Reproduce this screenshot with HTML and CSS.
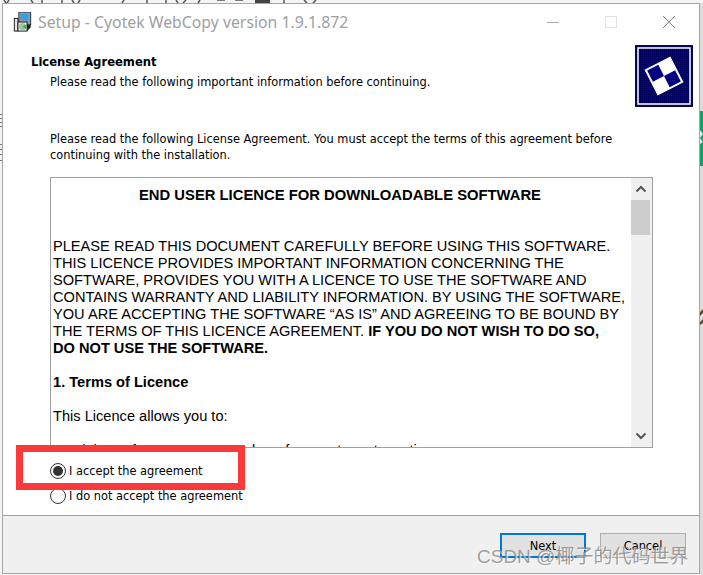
FILE: index.html
```html
<!DOCTYPE html>
<html lang="en">
<head>
<meta charset="utf-8">
<title>Setup - Cyotek WebCopy</title>
<link rel="stylesheet" href="styles.css">
</head>
<body>
<svg class="backdrop" width="703" height="575" viewBox="0 0 703 575" aria-hidden="true">
  <g stroke="#555" stroke-width="1.5" fill="none">
    <path d="M4 0l2 3M9 0l-2 3M31 0l2 3M42 0v3M62 0v3M72 0l2 3M80 0l-2 3M124 0l-2 3M147 0v3M166 0v3M176 0l2 3M186 0l-3 3M200 0l-2 3M217 0h8M235 0h8M284 0v3M304 0l3 3M316 0l-3 3"/>
  </g>
  <rect x="255" y="0" width="15" height="3" fill="#444"/>
  <path d="M0 114h2v1H0zM0 118h2v1H0zM0 122h2v1H0zM0 126h2v1H0zM0 144h2v1H0zM0 149h2v1H0zM0 154h2v1H0zM0 160h2v1H0z" fill="#777"/>
  <rect x="700" y="3" width="3" height="572" fill="#dcdcdc"/>
  <rect x="700" y="111" width="3" height="55" fill="#0aa36a"/>
  <path d="M700 130l3 4-3 4 3 4-3 2v-14z" fill="#dcefe7"/>
  <path d="M700 312l3-3v4l-3 3zM700 322l3-3v4l-3 2z" fill="#5a4a3a"/>
</svg>
<main class="window">
  <header class="titlebar">
    <svg class="app-icon" width="19" height="20" viewBox="0 0 20 22" aria-hidden="true">
      <rect x="6" y="0" width="13" height="14" fill="#8a9fb5" stroke="#222"/>
      <rect x="8.500" y="2" width="8" height="7" fill="#2ba3e8"/>
      <rect x="1" y="7" width="4" height="14" fill="#e4e4e4" stroke="#111"/>
      <rect x="5" y="11" width="10" height="10" fill="#eee" stroke="#111"/>
      <circle cx="10" cy="16" r="4" fill="#9cc8a0"/>
      <path d="M10 16l4-2v5z" fill="#35b43a"/>
      <path d="M15 14h4v3l-4 4z" fill="#222"/>
    </svg>
    <span class="title">Setup - Cyotek WebCopy version 1.9.1.872</span>
    <div class="window-controls">
      <svg width="14" height="14" viewBox="0 0 14 14" aria-hidden="true"><path d="M1 7.500h12" stroke="#a8a8a8"/></svg>
      <svg width="14" height="14" viewBox="0 0 14 14" aria-hidden="true"><rect x="1.500" y="1.500" width="11" height="11" fill="none" stroke="#e2e2e2"/></svg>
      <svg width="14" height="14" viewBox="0 0 14 14" aria-hidden="true"><path d="M1 1l12 12M13 1L1 13" stroke="#8c8c8c" fill="none"/></svg>
    </div>
  </header>
  <section class="content">
    <div class="heading">
      <div class="heading-text">
        <h1>License Agreement</h1>
        <p class="subtitle">Please read the following important information before continuing.</p>
      </div>
      <svg class="logo" width="58" height="62" viewBox="0 0 58 62" aria-hidden="true">
        <defs>
          <pattern id="dither" width="2" height="2" patternUnits="userSpaceOnUse">
            <rect width="2" height="2" fill="#000060"/>
            <rect width="1" height="1" fill="#0000c8"/>
          </pattern>
        </defs>
        <rect x="0" y="0" width="58" height="62" fill="#07074a"/>
        <rect x="3" y="3" width="52" height="56" fill="url(#dither)" stroke="#fff" stroke-width="1.500"/>
        <g transform="rotate(-27 29 31)">
          <rect x="15" y="17" width="28" height="28" fill="#fff" stroke="#fff"/>
          <rect x="16.500" y="18.500" width="12.500" height="12.500" fill="#000080"/>
          <rect x="29" y="31" width="12.500" height="12.500" fill="#000080"/>
        </g>
      </svg>
    </div>
    <p class="intro">Please read the following License Agreement. You must accept the terms of this agreement before continuing with the installation.</p>
    <div class="license">
      <div class="license-text">
        <h2>END USER LICENCE FOR DOWNLOADABLE SOFTWARE</h2>
        <p>PLEASE READ THIS DOCUMENT CAREFULLY BEFORE USING THIS SOFTWARE. THIS LICENCE PROVIDES IMPORTANT INFORMATION CONCERNING THE SOFTWARE, PROVIDES YOU WITH A LICENCE TO USE THE SOFTWARE AND CONTAINS WARRANTY AND LIABILITY INFORMATION. BY USING THE SOFTWARE, YOU ARE ACCEPTING THE SOFTWARE “AS IS” AND AGREEING TO BE BOUND BY THE TERMS OF THIS LICENCE AGREEMENT. <b>IF YOU DO NOT WISH TO DO SO,<br>DO NOT USE THE SOFTWARE.</b></p>
        <h3>1. Terms of Licence</h3>
        <p>This Licence allows you to:</p>
        <p>Load the Software on any number of computers at any time.</p>
      </div>
      <div class="scrollbar">
        <svg width="12" height="8" viewBox="0 0 12 8" aria-hidden="true"><path d="M1.500 6.500L6 2l4.500 4.500" fill="none" stroke="#555" stroke-width="2"/></svg>
        <div class="thumb"></div>
        <div class="track"></div>
        <svg width="12" height="8" viewBox="0 0 12 8" aria-hidden="true"><path d="M1.500 1.500L6 6l4.500-4.500" fill="none" stroke="#555" stroke-width="2"/></svg>
      </div>
    </div>
    <div class="choices">
      <label class="choice"><span class="radio checked"></span>I accept the agreement</label>
      <label class="choice"><span class="radio"></span>I do not accept the agreement</label>
    </div>
  </section>
  <footer class="actions">
    <button class="btn primary" type="button">Next</button>
    <button class="btn" type="button">Cancel</button>
  </footer>
</main>
<div class="highlight"></div>
<div class="watermark">CSDN @椰子的代码世界</div>
</body>
</html>
```

FILE: styles.css
```css
* { box-sizing: border-box; }
html, body { margin: 0; height: 100%; }
body {
  position: relative;
  width: 703px;
  height: 575px;
  overflow: hidden;
  background: #f4f4f4;
  padding: 3px 3px 1px 2px;
  display: flex;
  font-family: "DejaVu Sans", sans-serif;
  color: #000;
}
.backdrop { position: absolute; left: 0; top: 0; }
.window {
  position: relative;
  flex: 1;
  display: flex;
  flex-direction: column;
  background: #fff;
  border: 1px solid #a6a6a6;
}
.titlebar {
  height: 36px;
  display: flex;
  align-items: center;
  padding: 0 0 0 10px;
  flex: none;
}
.app-icon { flex: none; }
.title {
  margin-left: 6px;
  font-family: "Noto Sans", sans-serif;
  font-size: 15.8px;
  color: #a0a0a0;
  white-space: nowrap;
}
.window-controls {
  margin-left: auto;
  display: flex;
  gap: 44px;
  padding-right: 23px;
}
.content {
  flex: 1;
  min-height: 0;
  padding: 0 45px 0 47px;
  display: flex;
  flex-direction: column;
}
.heading {
  display: flex;
  justify-content: space-between;
  height: 62px;
  margin: 5px -39px 0 0;
}
.heading-text { padding-top: 9px; }
h1 {
  margin: 0 0 0 -19px;
  font-size: 11.6px;
  line-height: 16px;
  font-weight: bold;
}
.subtitle, .intro {
  margin: 4px 0 0;
  font-size: 11.4px;
  line-height: 16px;
}
.logo { flex: none; }
.intro { margin-top: 24px; width: 580px; }
.license {
  margin-top: 14px;
  height: 271px;
  width: 603px;
  display: flex;
  border: 1px solid #a0a0a0;
  overflow: hidden;
  flex: none;
}
.license-text {
  flex: 1;
  min-width: 0;
  padding: 8.5px 0 0 2px;
  font-family: "Liberation Sans", sans-serif;
  font-size: 14.62px;
  line-height: 17px;
}
.license-text h2 {
  margin: 0 0 34px;
  padding-right: 4px;
  text-align: center;
  font-size: 14.8px;
  line-height: 17px;
}
.license-text h3 {
  margin: 0 0 17px;
  font-size: 14.62px;
  line-height: 17px;
}
.license-text p { margin: 0 0 17px; }
.scrollbar {
  width: 21px;
  flex: none;
  display: flex;
  flex-direction: column;
  align-items: center;
  background: #f0f0f0;
  padding: 7px 2px 7px 0;
}
.thumb {
  width: 19px;
  height: 35px;
  margin-top: 7px;
  background: #cdcdcd;
  flex: none;
}
.track { flex: 1; }
.choices {
  margin-top: 15px;
  display: flex;
  flex-direction: column;
  gap: 9px;
}
.choice {
  display: flex;
  align-items: center;
  gap: 3px;
  font-size: 11.4px;
  line-height: 16px;
  height: 16px;
}
.radio {
  width: 16px;
  height: 16px;
  border: 1px solid #333;
  border-radius: 50%;
  background: #fff;
  display: flex;
  align-items: center;
  justify-content: center;
  flex: none;
}
.radio.checked::after {
  content: "";
  width: 10px;
  height: 10px;
  border-radius: 50%;
  background: #333;
}
.actions {
  height: 58px;
  flex: none;
  background: #f0f0f0;
  border-top: 1px solid #a0a0a0;
  display: flex;
  justify-content: flex-end;
  gap: 14px;
  padding: 17px 13px 0 0;
}
.btn {
  width: 86px;
  height: 25px;
  padding: 0;
  background: #e1e1e1;
  border: 1px solid #adadad;
  font-family: "DejaVu Sans", sans-serif;
  font-size: 11.4px;
  color: #000;
}
.btn.primary { border: 2px solid #0078d7; }
.highlight {
  position: absolute;
  left: 16px;
  top: 445px;
  width: 229px;
  height: 45px;
  border: 7px solid #fa3a3a;
}
.watermark {
  position: absolute;
  left: 477px;
  top: 545px;
  font-family: "Liberation Sans", "Noto Sans CJK SC", sans-serif;
  font-size: 19px;
  line-height: 24px;
  color: rgba(130, 130, 130, 0.75);
  text-shadow: 1px 1px 0 rgba(255, 255, 255, 0.7);
  white-space: nowrap;
}
```
